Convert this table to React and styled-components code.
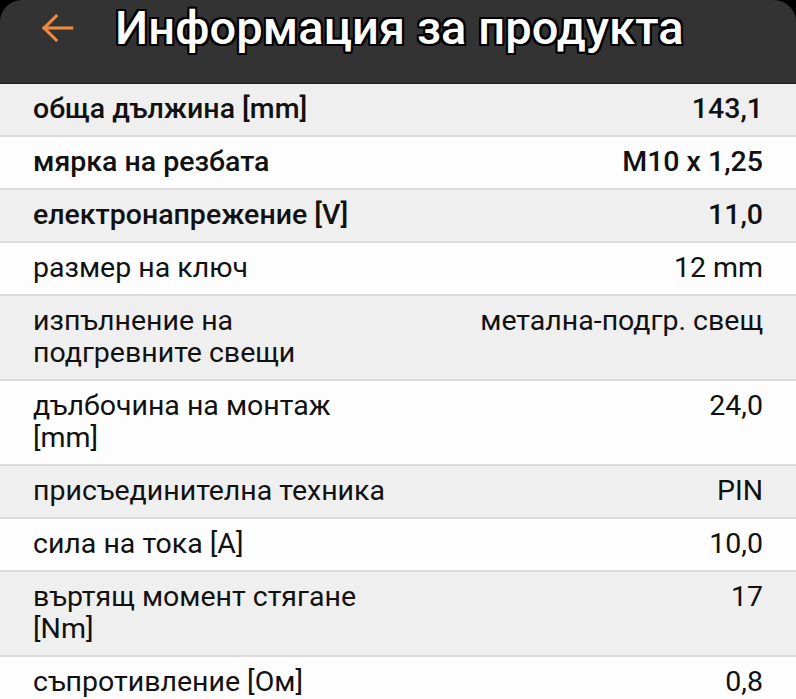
import React from 'react'
import styled, { createGlobalStyle } from 'styled-components'

const GlobalStyle = createGlobalStyle`
  html, body {
    margin: 0;
    padding: 0;
    background: #000;
  }
  body {
    font-family: Roboto, "Noto Sans", "Liberation Sans", sans-serif;
    -webkit-font-smoothing: antialiased;
  }
`

const Page = styled.div`
  width: 796px;
  height: 699px;
  overflow: hidden;
  background: #000;
`

const Header = styled.header`
  display: flex;
  align-items: center;
  gap: 36px;
  height: 84px;
  padding: 0 0 28px 35px;
  box-sizing: border-box;
  background: #333333;
  border-bottom: 1px solid #1e1e1e;
  border-radius: 22px 22px 0 0;
`

const BackButton = styled.button`
  display: flex;
  align-items: center;
  justify-content: center;
  width: 44px;
  height: 44px;
  padding: 0;
  border: 0;
  background: none;
  color: #f08a3c;
`

const Title = styled.h1`
  margin: 0;
  font-size: 47px;
  font-weight: 500;
  letter-spacing: 0.1px;
  color: #fff;
  text-shadow:
    -2px -2px 0 #000, 2px -2px 0 #000, -2px 2px 0 #000, 2px 2px 0 #000,
    0 -2px 0 #000, 0 2px 0 #000, -2px 0 0 #000, 2px 0 0 #000;
`

const List = styled.div`
  display: flex;
  flex-direction: column;
  background: #fff;
`

const Row = styled.div`
  display: flex;
  justify-content: space-between;
  align-items: flex-start;
  padding: 9px 33px 10px 33px;
  border-bottom: 2px solid #dcdcdc;
  background: ${(p) => (p.shaded ? '#efefef' : '#fdfdfd')};
  font-size: 28.5px;
  line-height: 32px;
  color: #111;
  font-weight: ${(p) => (p.strong ? 500 : 400)};
`

const Label = styled.div`
  flex: 0 0 362px;
`

const Value = styled.div`
  flex: 1;
  text-align: right;
`

const specs = [
  { label: 'обща дължина [mm]', value: '143,1', strong: true },
  { label: 'мярка на резбата', value: 'M10 x 1,25', strong: true },
  { label: 'електронапрежение [V]', value: '11,0', strong: true },
  { label: 'размер на ключ', value: '12 mm' },
  { label: 'изпълнение на подгревните свещи', value: 'метална-подгр. свещ' },
  { label: 'дълбочина на монтаж [mm]', value: '24,0' },
  { label: 'присъединителна техника', value: 'PIN' },
  { label: 'сила на тока [A]', value: '10,0' },
  { label: 'въртящ момент стягане [Nm]', value: '17' },
  { label: 'съпротивление [Ом]', value: '0,8' },
]

function ArrowLeft() {
  return (
    <svg width="44" height="44" viewBox="0 0 24 24" fill="none" stroke="currentColor" strokeWidth="1.7" strokeLinecap="square">
      <path d="M20 12H5" />
      <path d="M11.5 5.5L5 12l6.5 6.5" />
    </svg>
  )
}

export default function App() {
  return (
    <Page>
      <GlobalStyle />
      <Header>
        <BackButton aria-label="Назад">
          <ArrowLeft />
        </BackButton>
        <Title>Информация за продукта</Title>
      </Header>
      <List>
        {specs.map((s, i) => (
          <Row key={s.label} shaded={i % 2 === 0} strong={s.strong}>
            <Label>{s.label}</Label>
            <Value>{s.value}</Value>
          </Row>
        ))}
      </List>
    </Page>
  )
}
